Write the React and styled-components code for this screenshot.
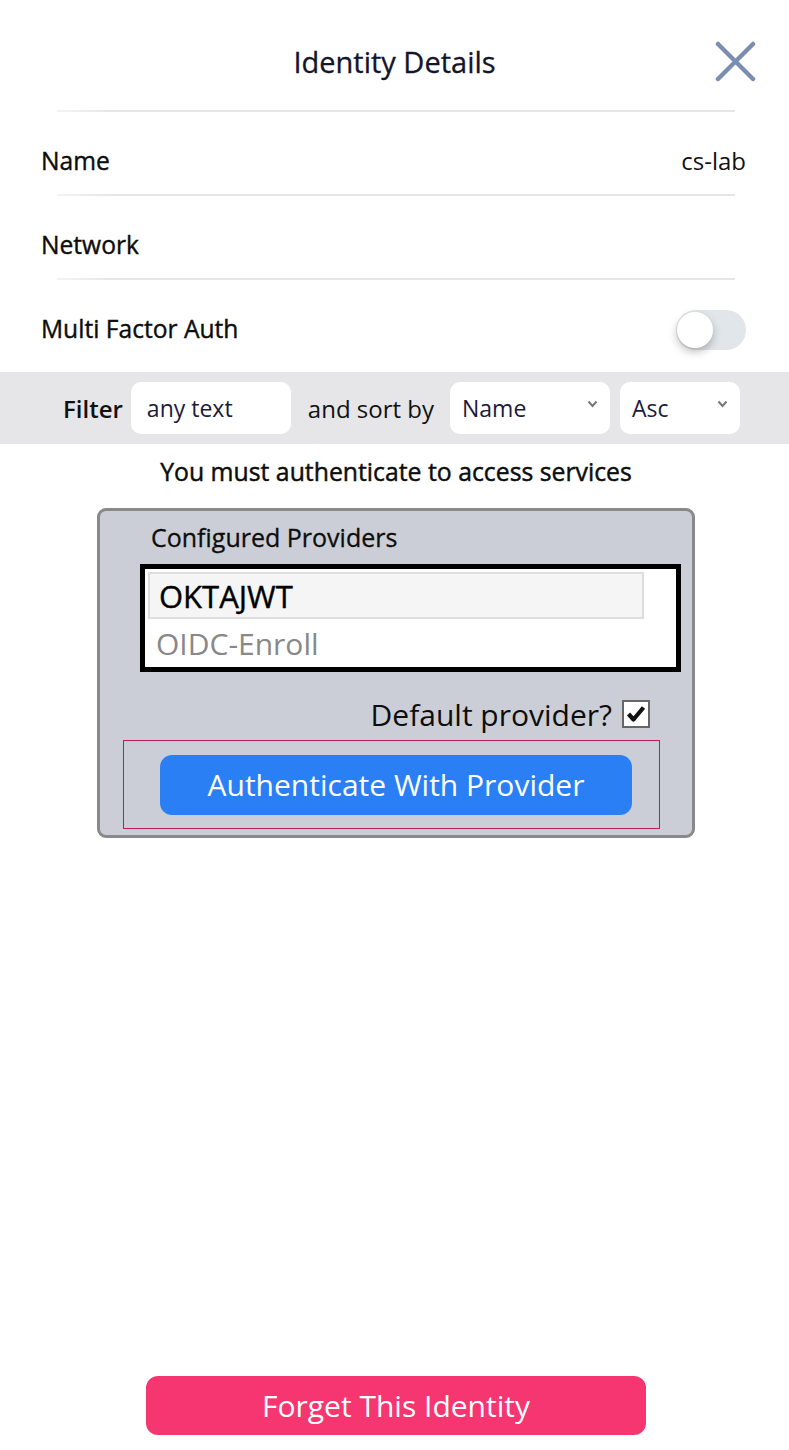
import styled, { createGlobalStyle } from "styled-components";

const GlobalStyle = createGlobalStyle`
  * { box-sizing: border-box; }
  body {
    margin: 0;
    background: #fff;
    font-family: "Open Sans", "Noto Sans", sans-serif;
  }
`;

const Page = styled.div`
  width: 789px;
  min-height: 1450px;
  display: flex;
  flex-direction: column;
  background: #fff;
`;

const Header = styled.header`
  height: 110px;
  display: flex;
  align-items: center;
  justify-content: center;
  position: relative;
  padding-top: 12px;
`;

const Title = styled.h1`
  margin: 0;
  font-size: 29px;
  font-weight: 400;
  -webkit-text-stroke: 0.3px #14142b;
  color: #14142b;
`;

const Close = styled.button`
  position: absolute;
  right: 32px;
  top: 41px;
  width: 42px;
  height: 42px;
  padding: 0;
  border: 0;
  background: none;
  cursor: pointer;
`;

const Divider = styled.hr`
  margin: 0 54px 0 57px;
  border: 0;
  height: 2px;
  background: linear-gradient(to right, #f4f4f4, #e6e6e6 8%, #e6e6e6);
`;

const Row = styled.div`
  height: 82px;
  display: flex;
  align-items: center;
  justify-content: space-between;
  padding: 14px 43px 0 41px;
`;

const Label = styled.span`
  font-size: 24.6px;
  color: #0d0d0d;
  -webkit-text-stroke: 0.4px #0d0d0d;
`;

const Value = styled.span`
  font-size: 24px;
  color: #111;
`;

const Toggle = styled.div`
  width: 70px;
  height: 40px;
  margin-top: 3px;
  border-radius: 20px;
  background: #e1e6ea;
  position: relative;
  &::after {
    content: "";
    position: absolute;
    left: 1px;
    top: 2px;
    width: 36px;
    height: 36px;
    border-radius: 50%;
    background: #fff;
    box-shadow: 0 4px 8px rgba(0, 0, 0, 0.25);
  }
`;

const FilterBar = styled.div`
  margin-top: 10px;
  height: 72px;
  background: #e6e6e8;
  display: flex;
  align-items: center;
  padding-left: 63px;
`;

const FilterLabel = styled.span`
  font-size: 24px;
  font-weight: 600;
  color: #111;
  margin-right: 8px;
`;

const SortLabel = styled.span`
  font-size: 24px;
  color: #111;
  margin: 0 16px 0 17px;
`;

const Field = styled.div`
  width: ${(p) => p.$w}px;
  height: 52px;
  background: #fff;
  border-radius: 10px;
  display: flex;
  align-items: center;
  justify-content: space-between;
  padding: 0 12px 0 ${(p) => p.$pl || 12}px;
  margin-right: ${(p) => p.$mr || 0}px;
  font-size: 23px;
  color: #1b1b3a;
`;

const Chevron = () => (
  <svg width="11" height="8" viewBox="0 0 11 8" style={{ marginTop: -8 }}>
    <path d="M1.5 1.5 L5.5 6 L9.5 1.5" fill="none" stroke="#777" strokeWidth="2" />
  </svg>
);

const Notice = styled.p`
  margin: 10px 0 0;
  text-align: center;
  padding-left: 3px;
  font-size: 24.8px;
  color: #0d0d0d;
  -webkit-text-stroke: 0.45px #0d0d0d;
`;

const Panel = styled.section`
  margin: 20px 0 0 97px;
  width: 598px;
  background: #cbced6;
  border: 3px solid #898989;
  border-radius: 9px;
  padding: 11px 0 6px 23px;
`;

const PanelTitle = styled.div`
  font-size: 25px;
  color: #0d0d0d;
  -webkit-text-stroke: 0.3px #0d0d0d;
  padding-left: 28px;
  line-height: 30px;
`;

const ProviderList = styled.div`
  margin: 12px 0 0 17px;
  width: 541px;
  height: 108px;
  border: 5px solid #000;
  background: #fff;
  padding: 3px 32px 0 3px;
`;

const Option = styled.div`
  height: ${(p) => (p.$selected ? 47 : 48)}px;
  display: flex;
  align-items: center;
  padding-left: ${(p) => (p.$selected ? 9 : 8)}px;
  font-size: ${(p) => (p.$selected ? 31 : 30)}px;
  color: ${(p) => (p.$selected ? "#000" : "#888")};
  -webkit-text-stroke: ${(p) => (p.$selected ? "0.4px #000" : "0")};
  background: ${(p) => (p.$selected ? "#f5f5f5" : "transparent")};
  border: ${(p) => (p.$selected ? "2px solid #dddddd" : "0")};
`;

const DefaultRow = styled.label`
  display: flex;
  align-items: center;
  justify-content: flex-end;
  gap: 10px;
  height: 40px;
  margin: 22px 42px 0 0;
  font-size: 30px;
  color: #0d0d0d;
`;

const Check = styled.span`
  width: 28px;
  height: 28px;
  background: #fff;
  border: 2px solid #666;
  display: flex;
  align-items: center;
  justify-content: center;
`;

const ActionBox = styled.div`
  margin-top: 6px;
  width: 537px;
  height: 89px;
  border: 1px solid #c2185b;
  display: flex;
  align-items: center;
  padding-left: 36px;
`;

const Button = styled.button`
  width: ${(p) => p.$w}px;
  height: ${(p) => p.$h}px;
  border: 0;
  border-radius: 12px;
  background: ${(p) => p.$bg};
  color: #fff;
  font-family: inherit;
  font-size: 30px;
  cursor: pointer;
`;

const Footer = styled.footer`
  margin-top: auto;
  display: flex;
  justify-content: center;
  padding: 0 0 15px 3px;
`;

export default function App() {
  return (
    <Page>
      <GlobalStyle />
      <Header>
        <Title>Identity Details</Title>
        <Close aria-label="close">
          <svg width="42" height="42" viewBox="0 0 42 42">
            <path
              d="M3 3 L38 38 M38 3 L3 38"
              stroke="#7b8db0"
              strokeWidth="4.5"
              strokeLinecap="round"
            />
          </svg>
        </Close>
      </Header>
      <Divider />
      <Row>
        <Label>Name</Label>
        <Value>cs-lab</Value>
      </Row>
      <Divider />
      <Row>
        <Label>Network</Label>
      </Row>
      <Divider />
      <Row>
        <Label>Multi Factor Auth</Label>
        <Toggle />
      </Row>
      <FilterBar>
        <FilterLabel>Filter</FilterLabel>
        <Field $w={160} $pl={16}>any text</Field>
        <SortLabel>and sort by</SortLabel>
        <Field $w={160} $mr={10}>
          Name <Chevron />
        </Field>
        <Field $w={120}>
          Asc <Chevron />
        </Field>
      </FilterBar>
      <Notice>You must authenticate to access services</Notice>
      <Panel>
        <PanelTitle>Configured Providers</PanelTitle>
        <ProviderList>
          <Option $selected>OKTAJWT</Option>
          <Option>OIDC-Enroll</Option>
        </ProviderList>
        <DefaultRow>
          Default provider?
          <Check>
            <svg width="20" height="18" viewBox="0 0 20 18">
              <path
                d="M2.5 9 L7.5 14.5 L17.5 2.5"
                fill="none"
                stroke="#111"
                strokeWidth="4.2"
                strokeLinejoin="round"
              />
            </svg>
          </Check>
        </DefaultRow>
        <ActionBox>
          <Button $w={472} $h={60} $bg="#2b7ff5">
            Authenticate With Provider
          </Button>
        </ActionBox>
      </Panel>
      <Footer>
        <Button $w={500} $h={59} $bg="#f53670">
          Forget This Identity
        </Button>
      </Footer>
    </Page>
  );
}
